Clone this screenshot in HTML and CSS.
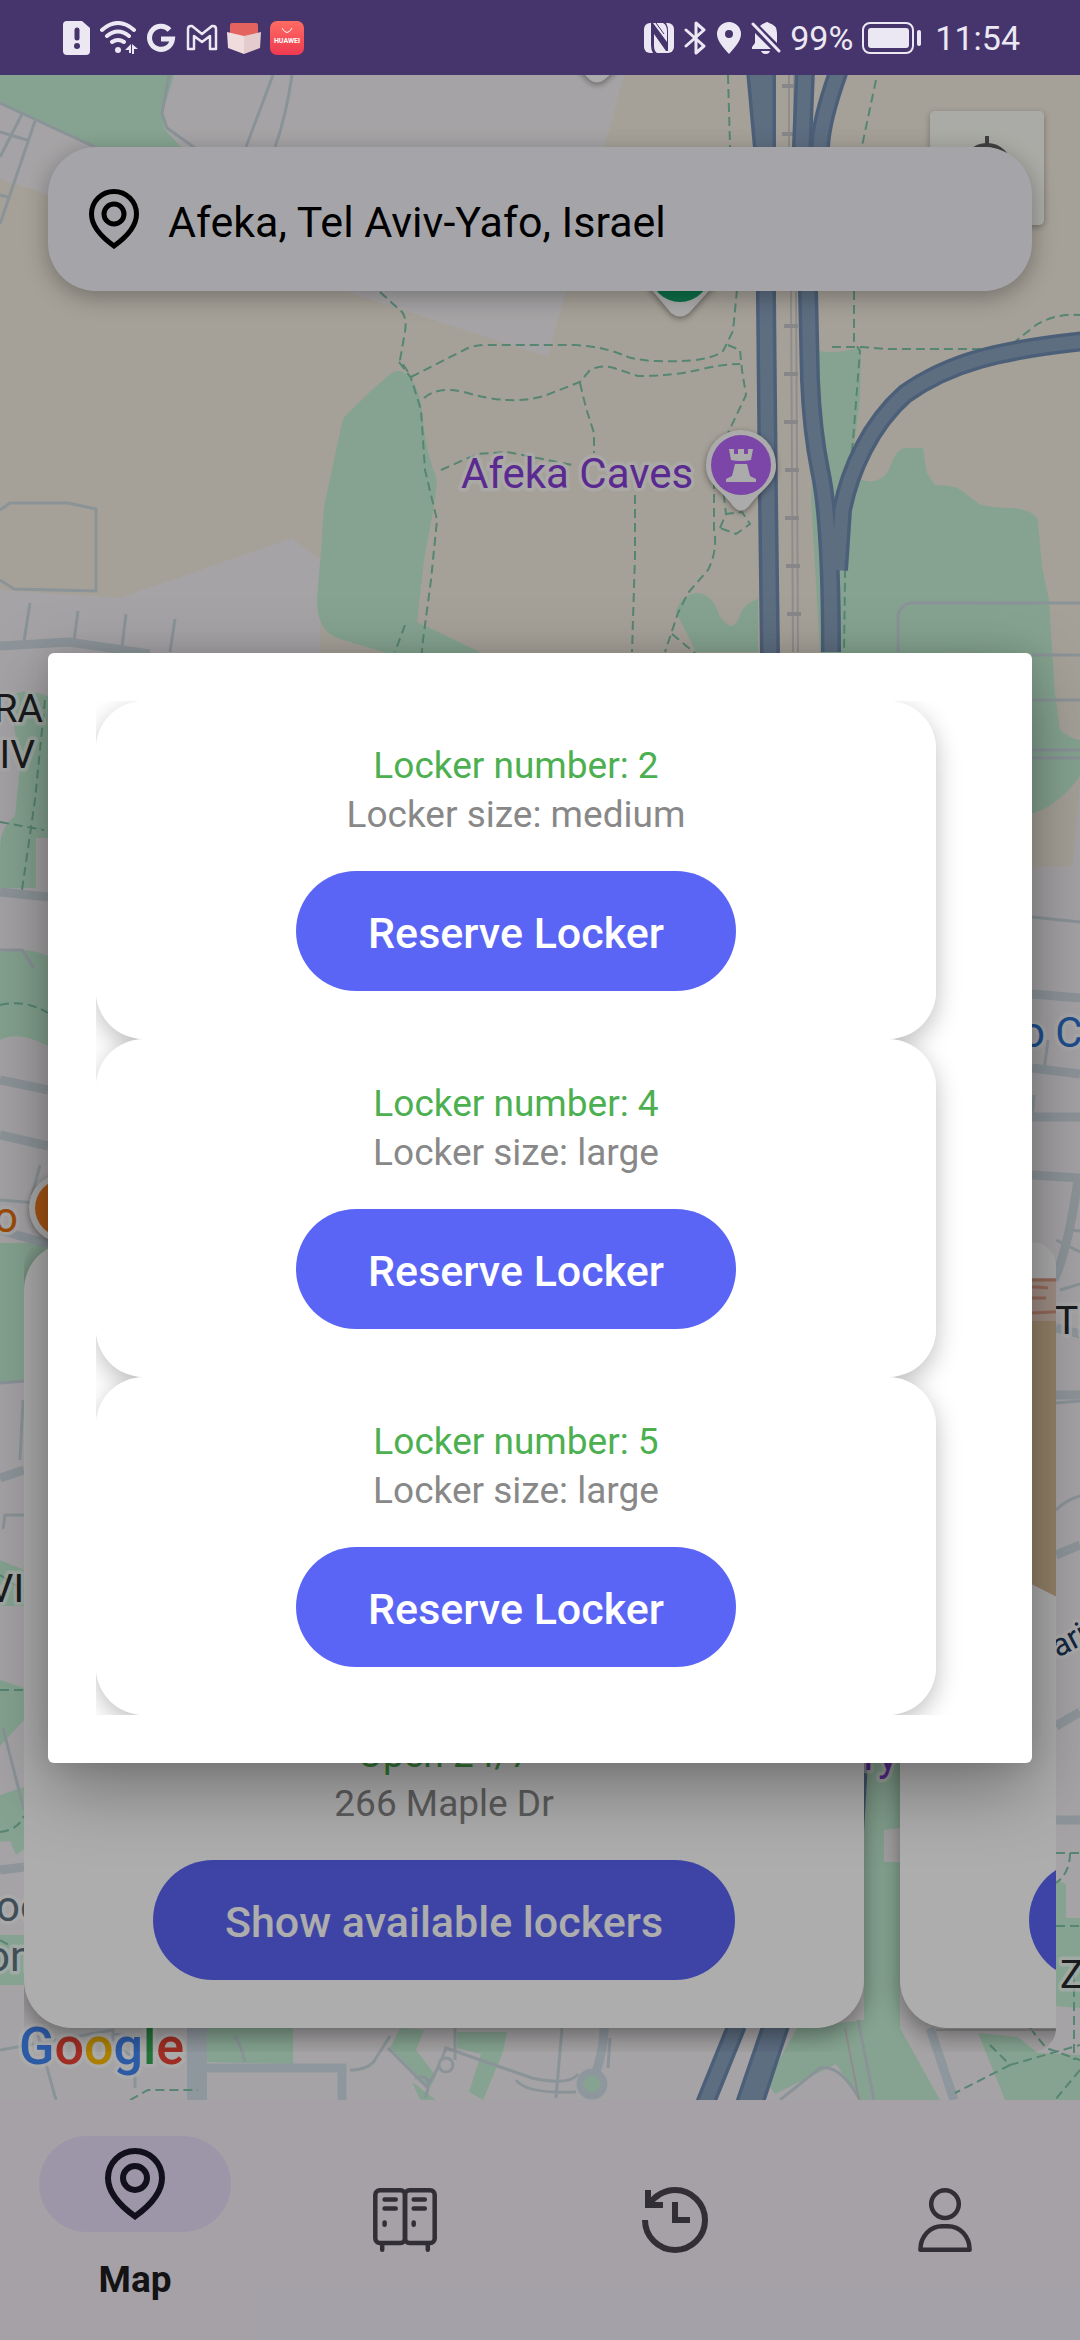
FILE: index.html
```html
<!DOCTYPE html>
<html lang="en">
<head>
<meta charset="utf-8">
<meta name="viewport" content="width=device-width, initial-scale=1">
<title>Lockers map</title>
<link rel="stylesheet" href="styles.css">
</head>
<body>
<header class="status-bar">
  <div class="status-group">
    <svg width="28" height="34" viewBox="0 0 28 34"><path fill="#ece8f3" d="M4 0h15l8 7v23a4 4 0 0 1-4 4H4a4 4 0 0 1-4-4V4a4 4 0 0 1 4-4z"/><path stroke="#46356c" stroke-width="5" stroke-linecap="round" d="M14 9v8"/><circle cx="14" cy="25" r="3" fill="#46356c"/></svg>
    <svg width="38" height="34" viewBox="0 0 38 34"><g fill="none" stroke="#ece8f3" stroke-width="4" stroke-linecap="round"><path d="M2 9Q18-5 34 9M7 15q11-9 22 0M12 21q6-4 12 0"/></g><circle cx="18" cy="29" r="3" fill="#ece8f3"/><path fill="#ece8f3" d="M25 29l6-6v9h-2v-3zM32 23l6 5h-4v5h-2z"/></svg>
    <svg width="30" height="34" viewBox="0 0 30 34"><path fill="none" stroke="#ece8f3" stroke-width="5" d="M22.500 9A11.500 11.500 0 1 0 25.500 18H14"/></svg>
    <svg width="32" height="34" viewBox="0 0 32 34"><path fill="none" stroke="#ece8f3" stroke-width="2.500" stroke-linejoin="round" d="M2 8q0-3 3-3h1l10 8 10-8h1q3 0 3 3v20h-6V15l-8 6-8-6v13H2z"/></svg>
    <svg width="34" height="34" viewBox="0 0 34 34"><path fill="#e5635f" d="M5 2h24q2 0 2 3v14H3V5q0-3 2-3z"/><path fill="#f0dcdc" d="M0 11l17 4v18L1 27z"/><path fill="#e4cccd" d="M34 11l-17 4v18l16-6z"/></svg>
    <svg width="34" height="34" viewBox="0 0 34 34"><defs><linearGradient id="store" x2="0" y2="1"><stop stop-color="#ff6b63"/><stop offset="1" stop-color="#ee3a50"/></linearGradient></defs><rect width="34" height="34" rx="7" fill="url(#store)"/><path fill="none" stroke="#fff" d="M12 7q5 9 10 0"/><text x="17" y="22" class="store-name">HUAWEI</text></svg>
  </div>
  <div class="status-group">
    <svg width="30" height="34" viewBox="0 0 30 34"><rect y="2" width="30" height="30" rx="6" fill="#ece8f3"/><path fill="#46356c" d="M7 2h2l14 19V10q0-6-4-8h3q2 3 2 8v20h-2L10 13v12q0 5 3 7h-4q-2-3-2-8z"/><path fill="none" stroke="#46356c" d="M12 2l8 11"/></svg>
    <svg width="24" height="34" viewBox="0 0 24 34"><path fill="none" stroke="#ece8f3" stroke-width="3" stroke-linejoin="round" stroke-linecap="round" d="M3 9l18 16-8 7V2l8 7L3 25"/></svg>
    <svg width="26" height="34" viewBox="0 0 26 34"><path fill="#ece8f3" fill-rule="evenodd" d="M13 1a12 12 0 0 0-12 12c0 7 6 13 12 20 6-7 12-13 12-20A12 12 0 0 0 13 1zm0 8a4 4 0 1 1 0 8 4 4 0 0 1 0-8z"/></svg>
    <svg width="30" height="34" viewBox="0 0 30 34"><path fill="#ece8f3" d="M4 12L20 28H1v-2l3-4zM9 5q2-2 5-3 2-2 4 0 8 2 8 10v10zM10 30h9q-1 3-4 3-4 0-5-3z"/><path stroke="#ece8f3" stroke-width="3" stroke-linecap="round" d="M2 3l26 27"/></svg>
    <span>99%</span>
    <svg class="battery" width="60" height="34" viewBox="0 0 60 34"><rect x="1" y="2" width="50" height="30" rx="7" fill="none" stroke="#ece8f3" stroke-width="2"/><rect x="6" y="7" width="41" height="20" rx="3" fill="#ece8f3"/><rect x="55" y="9" width="4" height="16" rx="2" fill="#ece8f3"/></svg>
    <time>11:54</time>
  </div>
</header>

<div class="app">
  <main class="map-screen">
    <svg class="map" viewBox="0 75 1080 2025" preserveAspectRatio="xMidYMin slice" role="img" aria-label="Map">
      <rect y="75" width="1080" height="2025" fill="#f4f1f3"/>
      <path class="sand" d="M0 179L548 357 624 75h456v708l-8 83-72 2H320V560l-28-22-172 60-120-8z"/>
      <g class="park">
        <path d="M0 75h174l-12 40 3 15 17 18-85-1L0 103z"/>
        <path d="M389 375q10-8 18 0 14 12 16 45 3 32 14 60l-2 20-11 60-7 62 65 31h-96l-49-15q-20-8-20-38l4-50 3-43 17-80 3-10 28-27z"/>
        <path d="M819 351q14 2 26 0l16-4-1 53-9 70 11 10q18 5 27-10 7-22 17-22h17l4 25 8 12q18 0 26 5l18 14q12 4 35 4 24 4 24 14l4 45 7 33 6 93 5 37q12 10 22 10v33q-20 30-48 40H820V652l-9-152z"/>
        <path d="M696 652l-20-40q5-19 23-19 14 2 20 22 8 11 12 11 7-2 10-14 6-10 17-13v53z"/>
        <path d="M10 698q10-12 38-2v142H36V888H0v-40q0-20 15-32l5-50z"/>
        <path d="M0 952q26-6 48 4v90q-30-16-48-6z"/>
        <path d="M0 1243h48v138l-48 3zM0 1560l24 10v36H0zM0 1680l24 8v32l-24 26zM0 1795l24-8v62l-8 6-6-14-10 1zM0 1935h24v50H0z"/>
        <path d="M207 2028h86v36l-86-2zM400 2028l24 2-8 20 20 26-6 12-40-40zM457 2032h50l-4 20-20 48-14-8 12-38-24-6zM412 2082l24 18-14 4z"/>
        <path d="M864 1762h36v266l40 72h-80l-24-36-61 30-8-12 30-54 67-8z"/>
        <path d="M978 2033l40 4 20 16 42 2v45h-75zM1056 1880l10 4v34h14v90l-24-2z"/>
      </g>
      <path d="M884 1830l16-2v34h-16z" fill="#f4f1f3"/>

      <g class="street">
        <path d="M0 103l97 45M22 114L0 157M35 121L0 224M0 132l27 8M0 195l8 2M169 75l-7 38 5 15 28 20M273 75l-27 72M292 75q-6 42-17 72"/>
        <path d="M0 510l10-7h58l28 6v82l-82-2-14-9M30 603l-6 38M78 611l-4 30M126 614l-4 33M175 619l-5 33"/>
        <path d="M898 652v-38q4-11 14-11h168M1032 655h48M1032 700h48M1032 750h48M1032 758h48M1032 917l48 5M1048 1040l-4 30M1034 1095l-2 22"/>
        <path d="M0 950h22l12 18M0 1200l48 4M40 1165l-8 30M0 1383l24-2M23 1400l-3 60M24 1515H5l-2 14M3 1728l21 82M1056 1308l24 2M1070 1230l10 1M1060 1290l20-6M1056 1240l24 12M1056 1510q10-10 24-14M1056 1403l24-2"/>
        <path d="M0 2050l113-20v14l22 14v30M36 2028l20 72M113 2034l40 4M235 2036q6 10 10 26M350 2070q20 0 26-12l14-22M388 2048l38 38q8-6 20-38l86 30q38 8 46-4M455 2028v32M415 2078q20-6 10 20M516 2080q10 14 60 12M562 2028l-6 70M610 2038l-2 30M858 2020l16 80M780 2100l40-32q20-4 40 32"/>
      </g>
      <path class="avenue" d="M0 646l69-4 81 12M0 892l48 5M0 1080l48 10M0 1135l48 11M0 1230l48 14M0 1478l24-8M0 1870l24-3M1032 994l48 4M1032 1068l48 6M1032 1117h48M1032 1175l48 3M1056 1395h24M1056 1328l24 6M1056 1555l24-10M1056 1726l24-14M1056 1820h24M1078 1180q-10 70-24 100"/>
      <path d="M197 2028v72" fill="none" stroke="#d2dfe8" stroke-width="20"/>
      <path d="M197 2068h145v32" fill="none" stroke="#d2dfe8" stroke-width="9"/>
      <path d="M604 2028q0 20-8 44" fill="none" stroke="#d2dfe8" stroke-width="9"/>
      <circle cx="592" cy="2084" r="12" fill="#c5f1d5" stroke="#d2dfe8" stroke-width="7"/>
      <circle cx="446" cy="2065" r="7" fill="#f4f1f3" stroke="#ccd9e0" stroke-width="3"/>
      <path d="M930 2028l24 72" fill="none" stroke="#d2dfe8" stroke-width="9"/>

      <g class="trail">
        <path d="M380 292l22 20q5 6 3 20l-5 28 12 18M399 362l12 16 10 32 4 60 12 50-6 60-8 60-4 42 20 20M411 377l55-28q8-4 20-4h90q30 2 52 12 14 4 30 4 50 2 65-10l10-20 4-41"/>
        <path d="M424 398q14-12 40-6 46 14 80 4l36-14 10-12q12-6 24-2l24 8q34 0 60-6 24-6 42-6M580 383l6 25 8 25v20M441 470l36-16 30-2 66 13M635 495v60l-3 97"/>
        <path d="M728 345l12 5 2 20 4 25-18 38M714 480v50q4 20-6 40l-20 23-10 20-13 39M672 634l24 20M720 528l6-14 16-2 8 12-14 10zM722 480l4 34M728 75l6 212M876 80l-14 66M854 291v50l6 10-7 90-7 60-2 151M832 347h30l24 2h120q20-16 30-24 20-12 44-10"/>
        <path d="M405 625l-10 27M45 700l-10 100-13 90M0 822l44 8M0 1005q25-6 48 8M0 1690h24M0 1832q18-2 24-16M130 2100l18-10h50M0 1575l24 16M0 1940l14 8M1056 1853h24M1070 1853q0 20-14 30M1056 1926h24M1030 2028l16 20 34 12M990 2045l20 20 70-20M1010 2065l-55 28M1074 1960v100M1080 2070l-25 30"/>
      </g>

      <g class="rail">
        <path d="M789 75v62l2 150 2 365M794 75v62l2 150 2 365M1056 2030h-120M845 2028l14 72"/>
        <path class="rail-ticks" d="M782 86h14M782 134h14M784 326h14M784 374h14M784 422h14M785 470h14M785 518h14M786 566h14M787 614h14"/>
      </g>
      <g class="highway-edge">
        <path d="M766 70v230l2 200 2 155M756 70l9 100"/>
        <path d="M805 70l-3 77 6 144 2 89q2 50 10 90 11 50 11 182"/>
        <path d="M839 70q-18 50-19 77-8 30-10 60"/>
        <path d="M1085 341C1000 350 950 362 905 394 870 425 850 470 842 510L838 570"/>
        <path d="M737 2025l-32 79M780 2025l-26 79M772 2025l-27 79"/>
      </g>
      <g class="highway">
        <path d="M766 70v230l2 200 2 155M756 70l9 100"/>
        <path d="M805 70l-3 77 6 144 2 89q2 50 10 90 11 50 11 182"/>
        <path d="M839 70q-18 50-19 77-8 30-10 60"/>
        <path d="M1085 341C1000 350 950 362 905 394 870 425 850 470 842 510L838 570"/>
        <path d="M737 2025l-32 79M780 2025l-26 79M772 2025l-27 79"/>
      </g>
      <path d="M864 1762h4l-4 70z" fill="#718db2"/>

      <g class="marker">
        <path d="M575 65h46l-17 15q-7 5-14 0z" fill="#fdfdfd"/>
        <path d="M645 282h72l-28 31q-9 7-18 0z" fill="#fdfdfd"/><circle cx="680" cy="272" r="30" fill="#12a56b"/>
        <path d="M741 430a35 35 0 0 1 35 36c0 18-16 24-27 40q-8 9-16 0c-11-16-27-22-27-40a35 35 0 0 1 35-36z" fill="#fdfdfd"/><circle cx="741" cy="465" r="30" fill="#b568f7"/>
        <path d="M729 449h5v5h4v-5h6v5h4v-5h5l-2 11q-10 2-20 0zM735 464h12l3 12 6 3v3h-30v-3l6-3z" fill="#fdfdfd"/>
        <circle cx="64" cy="1208" r="35" fill="#fdfdfd"/><circle cx="64" cy="1208" r="29" fill="#f57c1f"/>
      </g>

      <g class="map-labels">
        <text x="461" y="488" class="label-attraction">Afeka Caves</text>
        <text x="898" y="1770" text-anchor="end" class="label-attraction">ry</text>
        <text x="43" y="722" text-anchor="end" class="label-area">RA</text>
        <text x="35" y="768" text-anchor="end" class="label-area">IV</text>
        <text x="24" y="1602" text-anchor="end" class="label-area">VI</text>
        <text x="1055" y="1334" class="label-area">TE</text>
        <text x="1060" y="1988" class="label-area">ZA</text>
        <text x="1021" y="1047" class="label-shop">o C</text>
        <text x="18" y="1232" text-anchor="end" class="label-food">o</text>
        <text x="-4" y="1921" class="label-place">oo</text>
        <text x="-14" y="1971" class="label-place">on</text>
        <text x="1058" y="1658" transform="rotate(-28 1058 1658)" class="label-road">ari</text>
        <text x="19" y="2064" class="google"><tspan fill="#4285f4">G</tspan><tspan fill="#ea4335">o</tspan><tspan fill="#fbbc04">o</tspan><tspan fill="#4285f4">g</tspan><tspan fill="#34a853">l</tspan><tspan fill="#ea4335">e</tspan></text>
      </g>
    </svg>

    <button class="locate" type="button" aria-label="My location">
      <svg width="66" height="66" viewBox="0 0 66 66"><g fill="none" stroke="#5f5f5f" stroke-width="4"><circle cx="33" cy="33" r="23"/><path d="M33 1v10M33 55v10M1 33h10M55 33h10"/></g><circle cx="33" cy="33" r="12" fill="#5f5f5f"/></svg>
    </button>

    <label class="search">
      <svg width="60" height="60" viewBox="0 0 24 24" fill="none" stroke="#000" stroke-width="2"><path d="M12 22.800C9.500 21 3 16 3 10a9 9 0 0 1 18 0c0 6-6.500 11-9 12.800z"/><circle cx="12" cy="10" r="4"/></svg>
      <input class="search-input" type="text" value="Afeka, Tel Aviv-Yafo, Israel" aria-label="Location">
    </label>

    <section class="carousel" aria-label="Stations">
      <article class="station-card">
        <div class="station-picture"></div>
        <p class="line line-green">Open 24/7</p>
        <p class="line line-grey">266 Maple Dr</p>
        <button class="pill-button" type="button">Show available lockers</button>
      </article>
      <article class="station-card">
        <svg class="station-picture" viewBox="0 0 768 452" preserveAspectRatio="xMinYMin slice"><path fill="#dcc29d" d="M60 43h600v200L380 450 60 288z"/><path fill="#ecd3c6" d="M60 0h600v43H60z"/><path fill="none" stroke="#dd9c86" stroke-width="3" d="M60 2h60M80 10q16-2 32 0M60 20h50M60 34q30 3 80-2"/></svg>
        <p class="line line-green"></p>
        <p class="line line-grey"></p>
        <button class="pill-button" type="button">Show available lockers</button>
      </article>
    </section>
  </main>

  <nav class="bottom-nav">
    <a class="nav-item nav-item-active" href="#map">
      <span class="nav-pill"><svg width="72" height="72" viewBox="0 0 24 24" fill="none" stroke="currentColor" stroke-width="2"><path d="M12 22.800C9.500 21 3 16 3 10a9 9 0 0 1 18 0c0 6-6.500 11-9 12.800z"/><circle cx="12" cy="10" r="4"/></svg></span>
      <span class="nav-label">Map</span>
    </a>
    <a class="nav-item" href="#lockers" aria-label="Lockers">
      <svg width="72" height="72" viewBox="0 0 24 24" fill="none" stroke="currentColor" stroke-width="1.500" stroke-linecap="round"><rect x="2.100" y="2.100" width="9.900" height="17.600" rx="1.500"/><rect x="12" y="2.100" width="9.900" height="17.600" rx="1.500"/><path d="M5.200 5.200h3.700M5.200 8.200h3.700M14.900 5.200h3.700M14.900 8.200h3.700M5.200 12.800v.8M14.900 12.800v.8M4.400 20v1.900M19.600 20v1.900"/></svg>
    </a>
    <a class="nav-item" href="#history" aria-label="History">
      <svg width="72" height="72" viewBox="0 0 24 24" fill="none" stroke="currentColor" stroke-width="2"><path d="M2 12A10 10 0 1 0 12 2C8.500 2 5.300 3.900 3.500 6.700M3 2v5h5M12 6v6h5"/></svg>
    </a>
    <a class="nav-item" href="#profile" aria-label="Profile">
      <svg width="72" height="72" viewBox="0 0 24 24" fill="none" stroke="currentColor" stroke-width="1.500" stroke-linejoin="round"><circle cx="12" cy="6.700" r="4.600"/><path d="M3.800 21.900c0-4.700 3.400-7.800 7.200-7.800h2c3.800 0 7.200 3.100 7.200 7.800z"/></svg>
    </a>
  </nav>

  <div class="scrim">
    <section class="dialog" role="dialog" aria-modal="true" aria-label="Available lockers">
      <ul class="locker-list">
        <li class="locker-card">
          <p class="line line-green">Locker number: 2</p>
          <p class="line line-grey">Locker size: medium</p>
          <button class="pill-button" type="button">Reserve Locker</button>
        </li>
        <li class="locker-card">
          <p class="line line-green">Locker number: 4</p>
          <p class="line line-grey">Locker size: large</p>
          <button class="pill-button" type="button">Reserve Locker</button>
        </li>
        <li class="locker-card">
          <p class="line line-green">Locker number: 5</p>
          <p class="line line-grey">Locker size: large</p>
          <button class="pill-button" type="button">Reserve Locker</button>
        </li>
      </ul>
    </section>
  </div>
</div>
</body>
</html>
```
FILE: styles.css
```css
* {
  box-sizing: border-box;
}

body {
  margin: 0;
  min-height: 100vh;
  display: flex;
  flex-direction: column;
  font-family: Roboto, "Noto Sans", sans-serif;
  background: #f3edf7;
}

svg {
  display: block;
  flex: none;
}

/* System status bar */
.status-bar {
  display: flex;
  justify-content: space-between;
  align-items: center;
  height: 75px;
  padding: 0 60px 0 63px;
  background: #46356c;
  color: #ece8f3;
  font-size: 34px;
}

.status-group {
  display: flex;
  align-items: center;
  gap: 9px;
}

.battery {
  margin-right: 4px;
}

.store-name {
  fill: #fff;
  font-size: 7px;
  font-weight: 700;
  text-anchor: middle;
}

/* Application area under the status bar */
.app {
  position: relative;
  flex: 1;
  display: flex;
  flex-direction: column;
}

.map-screen {
  position: relative;
  flex: 1;
  display: flex;
  flex-direction: column;
  justify-content: space-between;
  padding: 72px 24px 48px;
  overflow: hidden;
}

.map {
  position: absolute;
  inset: 0;
  width: 100%;
  height: 100%;
}

.sand {
  fill: #f4ede0;
}

.park {
  fill: #c5f1d5;
}

.street {
  fill: none;
  stroke: #ccd9e0;
  stroke-width: 3;
}

.avenue {
  fill: none;
  stroke: #d0dce4;
  stroke-width: 9;
}

.trail {
  fill: none;
  stroke: #7fc4a8;
  stroke-width: 2;
  stroke-dasharray: 9 5;
}

.rail {
  fill: none;
  stroke: #d3cfd0;
  stroke-width: 2;
}

.rail-ticks {
  stroke: #c8c8cc;
  stroke-width: 4;
}

.highway-edge {
  fill: none;
  stroke: #718db2;
  stroke-width: 20;
}

.highway {
  fill: none;
  stroke: #8aa2bf;
  stroke-width: 13;
}

.marker {
  filter: drop-shadow(0 2px 3px rgba(0, 0, 0, .4));
}

.map-labels {
  stroke: rgba(255, 255, 255, .7);
  stroke-width: 7;
  stroke-linejoin: round;
  paint-order: stroke;
  font-size: 42px;
}

.label-attraction {
  fill: #863fd5;
}

.label-area {
  fill: #26282b;
  font-size: 39px;
}

.label-shop {
  fill: #2b74d2;
}

.label-food {
  fill: #e8710a;
}

.label-place {
  fill: #5d7480;
}

.label-road {
  fill: #1c3a5c;
  font-size: 32px;
}

.google {
  font-size: 52px;
  font-weight: 500;
}

.locate {
  position: absolute;
  top: 36px;
  right: 36px;
  width: 114px;
  height: 114px;
  padding: 24px;
  border: 0;
  border-radius: 5px;
  background: rgba(252, 255, 248, .85);
  box-shadow: 0 2px 6px rgba(0, 0, 0, .3);
}

.search {
  position: relative;
  display: flex;
  align-items: center;
  gap: 24px;
  height: 144px;
  margin: 0 24px;
  padding: 0 36px;
  border-radius: 48px;
  background: #f3f4f9;
  box-shadow: 0 6px 24px rgba(0, 0, 0, .3);
}

.search-input {
  flex: 1;
  min-width: 0;
  padding: 6px 0 0;
  border: 0;
  outline: 0;
  background: none;
  color: #000;
  font: 43px/56px Roboto, "Noto Sans", sans-serif;
}

/* Station cards scrolled sideways */
.carousel {
  position: relative;
  display: flex;
  gap: 36px;
  padding-bottom: 24px;
  border-radius: 24px;
  overflow: hidden;
}

.station-card {
  flex: 0 0 840px;
  display: flex;
  flex-direction: column;
  align-items: center;
  padding: 36px 36px 48px;
  border-radius: 48px;
  background: #fff;
  box-shadow: 0 8px 24px rgba(0, 0, 0, .4);
}

.station-picture {
  width: 100%;
  height: 452px;
}

.line {
  min-height: 49px;
  margin: 0;
  font-size: 37px;
  line-height: 49px;
}

.line-green {
  color: #4caf50;
}

.line-grey {
  color: #888;
}

.pill-button {
  height: 120px;
  margin-top: 32px;
  padding: 4px 72px 0;
  border: 0;
  border-radius: 60px;
  background: #5b65f5;
  color: #fff;
  font: 500 43px/56px Roboto, "Noto Sans", sans-serif;
}

/* Bottom navigation */
.bottom-nav {
  display: grid;
  grid-template-columns: repeat(4, 1fr);
  height: 240px;
  background: #f3edf7;
}

.nav-item {
  display: flex;
  flex-direction: column;
  align-items: center;
  justify-content: center;
  color: #49454f;
  text-decoration: none;
}

.nav-item-active {
  gap: 24px;
  color: #1d192b;
}

.nav-pill {
  display: grid;
  place-items: center;
  width: 192px;
  height: 96px;
  border-radius: 48px;
  background: #e8def8;
}

.nav-label {
  color: #1d1b20;
  font-size: 37px;
  font-weight: 700;
  line-height: 48px;
}

/* Modal dialog */
.scrim {
  position: absolute;
  inset: 0;
  display: flex;
  align-items: center;
  padding: 0 48px;
  background: rgba(0, 0, 0, .32);
}

.dialog {
  flex: 1;
  padding: 48px;
  border-radius: 6px;
  background: #fff;
  box-shadow: 0 24px 72px rgba(0, 0, 0, .34), 0 0 24px rgba(0, 0, 0, .1);
}

.locker-list {
  isolation: isolate;
  margin: 0;
  padding: 0;
  overflow: hidden;
  list-style: none;
}

.locker-card {
  position: relative;
  display: flex;
  flex-direction: column;
  align-items: center;
  max-width: 840px;
  padding: 40px 36px 48px;
  border-radius: 48px;
  background: #fff;
}

/* The shadow sits under every card, so that no card shades its neighbour */
.locker-card::before {
  content: "";
  position: absolute;
  inset: 0;
  z-index: -1;
  border-radius: 48px;
  box-shadow: 0 8px 24px rgba(0, 0, 0, .25);
}
```
